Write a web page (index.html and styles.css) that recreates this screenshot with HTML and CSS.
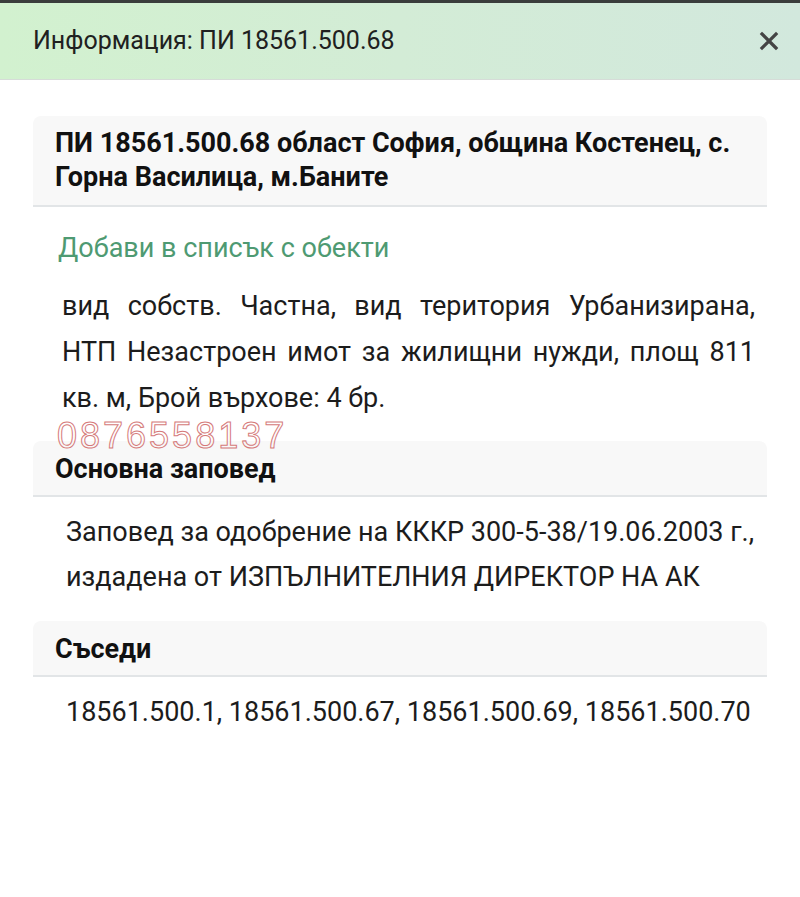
FILE: index.html
```html
<!DOCTYPE html>
<html lang="bg">
<head>
<meta charset="utf-8">
<title>Информация</title>
<link rel="stylesheet" href="styles.css">
</head>
<body>
<div class="topbar"></div>
<header class="header">
  <div class="title">Информация: ПИ 18561.500.68</div>
  <svg class="close" viewBox="0 0 20 20" width="20" height="20"><path d="M3 3 L17 17 M17 3 L3 17" stroke="#444" stroke-width="3.2" stroke-linecap="square"/></svg>
</header>
<main class="content">
  <section class="card">
    <div class="card-head main-head">ПИ 18561.500.68 област София, община Костенец, с. Горна Василица, м.Баните</div>
    <div class="link">Добави в списък с обекти</div>
    <p class="desc">вид собств. Частна, вид територия Урбанизирана, НТП Незастроен имот за жилищни нужди, площ 811 кв. м, Брой върхове: 4 бр.</p>
  </section>
  <section class="card order">
    <div class="watermark">0876558137</div>
    <div class="card-head">Основна заповед</div>
    <p class="text">Заповед за одобрение на КККР 300-5-38/19.06.2003 г., издадена от ИЗПЪЛНИТЕЛНИЯ ДИРЕКТОР НА АК</p>
  </section>
  <section class="card">
    <div class="card-head">Съседи</div>
    <p class="text">18561.500.1, 18561.500.67, 18561.500.69, 18561.500.70</p>
  </section>
</main>
</body>
</html>
```
FILE: styles.css
```css
html, body {
  margin: 0;
  padding: 0;
  background: #ffffff;
}
body {
  font-family: Roboto, "Noto Sans", "Liberation Sans", sans-serif;
  color: #1c1c1c;
  width: 800px;
  height: 897px;
  overflow: hidden;
}
.topbar {
  height: 3px;
  background: #3a3d3c;
}
.header {
  height: 77px;
  box-sizing: border-box;
  background: linear-gradient(90deg, #d2f1cf 0%, #d3ecd6 50%, #d2e8dd 100%);
  border-bottom: 1px solid #d6dcd8;
  display: flex;
  align-items: center;
  justify-content: space-between;
  padding: 0 21px 0 33px;
}
.title {
  font-size: 25px;
  color: #202020;
  margin-top: -2px;
}
.close {
  display: block;
  margin-top: -1px;
}
.content {
  padding: 36px 33px 0 33px;
}
.card {
  display: flex;
  flex-direction: column;
}
.order {
  position: relative;
  margin-top: 20px;
}
.card-head {
  background: #f8f8f8;
  border-radius: 8px 8px 0 0;
  border-bottom: 2px solid #e2e5e7;
  padding: 12px 22px 10px 22px;
  font-weight: 700;
  font-size: 27px;
  line-height: 32px;
  color: #111;
}
.main-head {
  line-height: 34px;
  padding: 10px 22px 11px 22px;
}
.link {
  color: #4e9a72;
  font-size: 27px;
  line-height: 32px;
  margin: 25px 0 0 25px;
}
.desc {
  margin: 19px 12px 0 29px;
  font-size: 27px;
  line-height: 46px;
  text-align: justify;
  color: #1c1c1c;
}
.text {
  margin: 13px 8px 21px 33px;
  font-size: 27px;
  line-height: 45px;
  color: #1c1c1c;
}
.watermark {
  position: absolute;
  left: 24px;
  top: -23px;
  font-family: "Liberation Sans", Arial, sans-serif;
  font-size: 36px;
  line-height: 36px;
  color: transparent;
  -webkit-text-stroke: 1px #d57a7a;
  z-index: 2;
  letter-spacing: 3px;
}
```
